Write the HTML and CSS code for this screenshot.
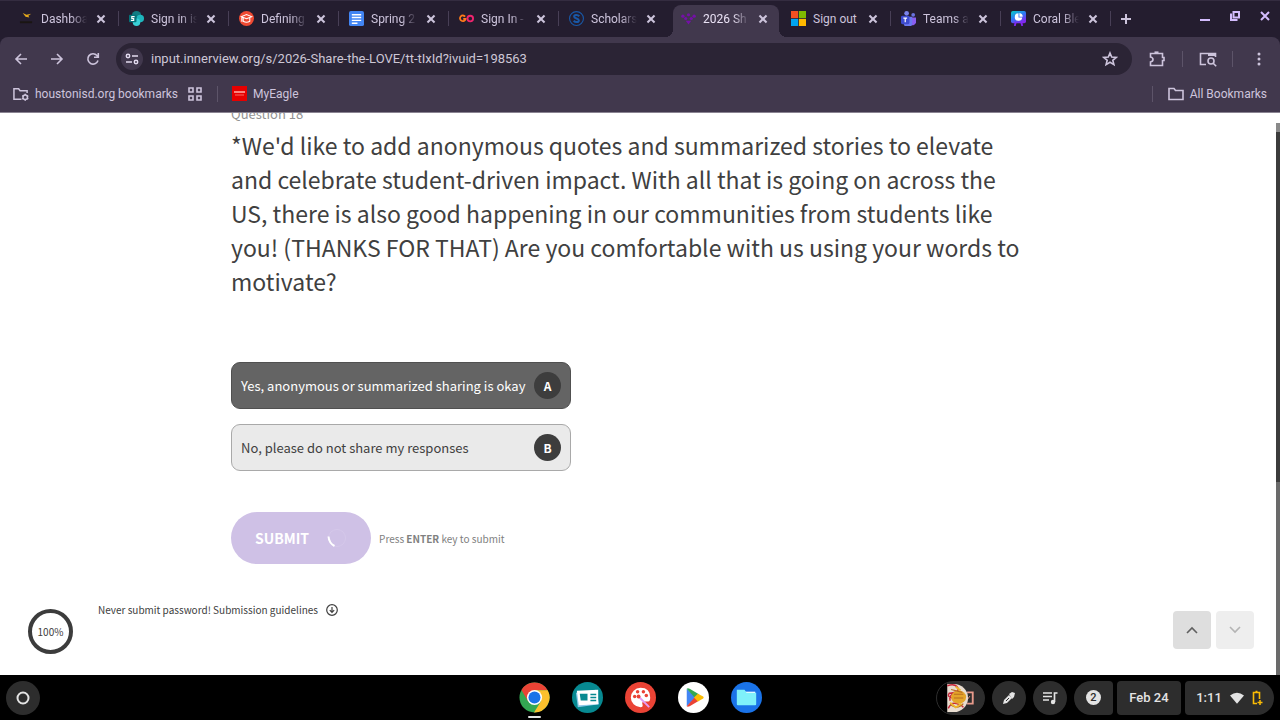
FILE: index.html
```html
<!DOCTYPE html>
<html lang="en">
<head>
    <meta charset="utf-8">
    <title>2026 Share the LOVE</title>
    <meta name="viewport" content="width=device-width, initial-scale=1">
    <link rel="stylesheet" href="styles.css">
</head>
<body>
    <!-- tabs -->
    <header class="tabstrip">
        <nav class="tabs">
            <div class="tab">
                <svg class="favicon" viewBox="0 0 16 16"><path d="M4 2l4 2 5-1-3 2 1 2-4-1z" fill="#e5a91c"/><path d="M1 12h13" stroke="#1a1512" stroke-width="2"/></svg>
                <a class="tab-title" href="#">Dashboa</a>
                <button class="tab-close" aria-label="Close tab"></button>
            </div>
            <div class="tab">
                <svg class="favicon" viewBox="0 0 16 16"><circle cx="8" cy="5" r="5" fill="#117c83"/><circle cx="12" cy="8" r="4" fill="#1eb6bd"/><circle cx="8" cy="12" r="4" fill="#39cfd6"/><rect y="4" width="8" height="8" rx="1" fill="#04727a"/><path d="M6 6H3v2h2v2H2" fill="none" stroke="#fff" stroke-width="1.2"/></svg>
                <a class="tab-title" href="#">Sign in is</a>
                <button class="tab-close" aria-label="Close tab"></button>
            </div>
            <div class="tab">
                <svg class="favicon" viewBox="0 0 16 16"><circle cx="8" cy="8" r="8" fill="#f04a32"/><path d="M2.500 6L8 3.800 13.500 6 8 8.200zM4.500 7.500V11q3.500 2 7 0V7.500M3 6.500v5" fill="none" stroke="#fff" stroke-width="1.1"/></svg>
                <a class="tab-title" href="#">Defining</a>
                <button class="tab-close" aria-label="Close tab"></button>
            </div>
            <div class="tab">
                <svg class="favicon" viewBox="0 0 16 16"><rect width="16" height="16" rx="2" fill="#4285f4"/><path d="M3 4h10M3 7h10M3 10h10M3 13h6" stroke="#fff" stroke-width="1.500"/></svg>
                <a class="tab-title" href="#">Spring 2</a>
                <button class="tab-close" aria-label="Close tab"></button>
            </div>
            <div class="tab">
                <svg class="favicon" viewBox="0 0 16 16"><path d="M6.500 6A3 3 0 1 0 7 8.500H4.500" fill="none" stroke="#ff7a1a" stroke-width="1.900"/><circle cx="12" cy="8" r="3" fill="none" stroke="#f0246e" stroke-width="2"/></svg>
                <a class="tab-title" href="#">Sign In -</a>
                <button class="tab-close" aria-label="Close tab"></button>
            </div>
            <div class="tab">
                <svg class="favicon" viewBox="0 0 16 16"><circle cx="8" cy="8" r="7.400" fill="none" stroke="#1858a8" stroke-width="1.200"/><path d="M11 5.500C9 3.500 5.500 4 5.500 6S10.500 8 10.500 10 7 12.500 5 10.500" fill="none" stroke="#1858a8" stroke-width="2.200"/></svg>
                <a class="tab-title" href="#">Scholars</a>
                <button class="tab-close" aria-label="Close tab"></button>
            </div>
            <div class="tab active">
                <svg class="favicon" viewBox="0 0 16 16" fill="#7410a6"><circle cx="2" cy="5.500" r="1.800"/><circle cx="8" cy="4" r="1.700"/><circle cx="14" cy="5.500" r="1.800"/><circle cx="5" cy="8" r="1.700"/><circle cx="11" cy="8" r="1.700"/><path d="M5 10.500h6L8 14.500z"/></svg>
                <a class="tab-title" href="#">2026 Sh</a>
                <button class="tab-close" aria-label="Close tab"></button>
            </div>
            <div class="tab">
                <svg class="favicon" viewBox="0 0 16 16"><path d="M0 0h7.600v7.600H0z" fill="#f25022"/><path d="M8.400 0H16v7.600H8.400z" fill="#7fba00"/><path d="M0 8.400h7.600V16H0z" fill="#00a4ef"/><path d="M8.400 8.400H16V16H8.400z" fill="#ffb900"/></svg>
                <a class="tab-title full" href="#">Sign out</a>
                <button class="tab-close" aria-label="Close tab"></button>
            </div>
            <div class="tab">
                <svg class="favicon" viewBox="0 0 16 16"><circle cx="6" cy="2.500" r="2.500" fill="#7b83eb"/><circle cx="13" cy="4" r="2" fill="#6a73e0"/><path d="M8 7h8v5a4 4 0 0 1-5 3z" fill="#8a5cf0"/><path d="M3 6h9v6a4 4 0 0 1-9 2z" fill="#6b78f0"/><rect y="5" width="9" height="9" rx="1.500" fill="#3d4bcf"/><path d="M2.500 7.500h4M4.500 7.500V12" stroke="#fff" stroke-width="1.300"/></svg>
                <a class="tab-title" href="#">Teams a</a>
                <button class="tab-close" aria-label="Close tab"></button>
            </div>
            <div class="tab">
                <svg class="favicon" viewBox="0 0 16 16"><defs><linearGradient id="coral" x2="0.600" y2="1"><stop stop-color="#08cfc4"/><stop offset="0.500" stop-color="#2b7df5"/><stop offset="1" stop-color="#8128ef"/></linearGradient></defs><rect width="16" height="13" rx="2" fill="url(#coral)"/><path d="M5 12l-1 4M11 12l1 4" stroke="#8128ef" stroke-width="2"/><path d="M8 2.500A4 4 0 1 0 12 7H8z" fill="#fff"/><path d="M9 2a4 4 0 0 1 3.500 4H9z" fill="#fff"/></svg>
                <a class="tab-title" href="#">Coral Ble</a>
                <button class="tab-close" aria-label="Close tab"></button>
            </div>
        </nav>
        <button class="new-tab" aria-label="New tab"><svg viewBox="0 0 10 10"><path d="M5 0v10M0 5h10"/></svg></button>
        <div class="window-controls">
            <button aria-label="Minimize"><svg viewBox="0 0 10 10"><path d="M0 9h10"/></svg></button>
            <button aria-label="Restore"><svg viewBox="0 0 10 10"><path d="M3.500 1h5.500v5.500H3.500zM1 2.500V9h6.500"/></svg></button>
            <button aria-label="Close"><svg viewBox="0 0 10 10"><path d="M1 1l8 8M9 1L1 9"/></svg></button>
        </div>
    </header>

    <!-- toolbar -->
    <div class="toolbar">
        <button class="tool" aria-label="Back"><svg class="icon" viewBox="0 0 16 16"><path d="M14 8H3M8 3L3 8l5 5"/></svg></button>
        <button class="tool" aria-label="Forward"><svg class="icon" viewBox="0 0 16 16"><path d="M2 8h11M8 3l5 5-5 5"/></svg></button>
        <button class="tool" aria-label="Reload"><svg class="icon" viewBox="0 0 16 16"><path d="M13 9.500A5.200 5.200 0 1 1 12 4.500L13 6M13.300 2v4.300H9"/></svg></button>
        <div class="omnibox">
            <button class="site-info" aria-label="Site information"><svg viewBox="0 0 14 14"><circle cx="3" cy="4" r="1.700"/><path d="M7 4h6M1 10h6"/><circle cx="11" cy="10" r="1.700"/></svg></button>
            <input class="url" type="text" aria-label="Address" value="input.innerview.org/s/2026-Share-the-LOVE/tt-tIxId?ivuid=198563">
            <button class="star" aria-label="Bookmark this page"><svg class="icon" viewBox="0 0 16 16"><path d="M8 2l1.700 4.100 4.500.300-3.400 2.900 1.100 4.300L8 11.300l-3.900 2.300 1.100-4.300-3.400-2.900 4.500-.300z"/></svg></button>
        </div>
        <div class="toolbar-actions">
            <button class="action" aria-label="Extensions"><svg class="icon" viewBox="0 0 16 16"><path d="M1.500 2.500h12v4h1.500v3h-1.500v5h-12v-3.500q2.500-.500 2.500-2.500T1.500 6z"/><path d="M5.500 1.500h4" stroke-width="2.200"/></svg></button>
            <button class="action" aria-label="Search this page"><svg class="icon wide" viewBox="0 0 18 16"><path d="M7 13.500H1.500v-11h15V6"/><path d="M9 3.500h7.500" stroke-width="3"/><circle cx="12" cy="10" r="3"/><path d="M14.200 12.200l3 3"/></svg></button>
            <button class="action" aria-label="Menu"><svg class="icon dots" viewBox="0 0 16 16"><circle cx="8" cy="3" r="1.500"/><circle cx="8" cy="8" r="1.500"/><circle cx="8" cy="13" r="1.500"/></svg></button>
        </div>
    </div>

    <!-- bookmarks -->
    <div class="bookmarks">
        <a class="bookmark" href="#"><svg class="icon" viewBox="0 0 17 16"><path d="M9 13.500H1v-11h5l1.500 2H15V7"/><circle cx="13" cy="11.500" r="2.400"/><path d="M13 7.800v1.200M13 14v1.200M9.800 9.700l1 .600M15.200 12.700l1 .600M9.800 13.300l1-.600M15.200 10.300l1-.600"/></svg>houstonisd.org bookmarks</a>
        <a class="bookmark" href="#" aria-label="Apps"><svg class="icon" viewBox="0 0 16 16"><path d="M2 2h4v4H2zM10 2h4v4h-4zM2 10h4v4H2zM10 10h4v4h-4z"/></svg></a>
        <a class="bookmark divided" href="#"><svg class="oracle" viewBox="0 0 15 15"><path d="M0 0h15v15H0z" fill="#e60000"/><path d="M2 6h11" stroke="#ffb0a8" stroke-width="1.500"/><path d="M3 9h9" stroke="#f56a62"/></svg>MyEagle</a>
        <a class="bookmark all" href="#"><svg class="icon" viewBox="0 0 16 16"><path d="M1 2.500h5l1.500 2H15v9H1z"/></svg>All Bookmarks</a>
    </div>

    <!-- survey page -->
    <div class="viewport">
        <main class="survey">
            <form class="question">
                <div class="question-number">Question 18</div>
                <h1 class="question-title">*We'd like to add anonymous quotes and summarized stories to elevate and celebrate student-driven impact. With all that is going on across the US, there is also good happening in our communities from students like you! (THANKS FOR THAT) Are you comfortable with us using your words to motivate?</h1>
                <div class="options">
                    <label class="option">
                        <input type="radio" name="share" value="A" checked>
                        <span class="option-text">Yes, anonymous or summarized sharing is okay</span>
                        <span class="option-key">A</span>
                    </label>
                    <label class="option">
                        <input type="radio" name="share" value="B">
                        <span class="option-text">No, please do not share my responses</span>
                        <span class="option-key">B</span>
                    </label>
                </div>
                <div class="submit-row">
                    <button class="submit" type="button">SUBMIT
                        <svg class="spinner" viewBox="0 0 20 20"><circle cx="10" cy="10" r="8.500" stroke="#d5c8ea"/><path d="M1.500 8.500Q2 15 7.500 18" stroke="#fff" stroke-width="2"/></svg>
                    </button>
                    <span class="hint">Press <b>ENTER</b> key to submit</span>
                </div>
            </form>
            <footer class="survey-footer">
                <div class="progress">100%</div>
                <a class="guidelines" href="#">Never submit password! Submission guidelines
                    <svg viewBox="0 0 12 12"><circle cx="6" cy="6" r="5.300"/><path d="M6 3v5M3.800 6.200L6 8.500l2.200-2.300"/></svg>
                </a>
                <div class="pager">
                    <button aria-label="Previous question"><svg viewBox="0 0 14 14"><path d="M2 10l5-5 5 5"/></svg></button>
                    <button aria-label="Next question" disabled><svg viewBox="0 0 14 14"><path d="M2 4l5 5 5-5"/></svg></button>
                </div>
            </footer>
        </main>
        <div class="scrollbar"><div class="thumb"></div></div>
    </div>

    <!-- shelf -->
    <footer class="shelf">
        <div class="shelf-side">
            <button class="launcher" aria-label="Launcher"><svg viewBox="0 0 14 14"><circle cx="7" cy="7" r="5.500"/></svg></button>
        </div>
        <div class="apps-row">
            <button class="app running" aria-label="Chrome"><svg viewBox="0 0 32 32"><circle cx="16" cy="16" r="15.500" fill="#33a852"/><path d="M16 .500A15.500 15.500 0 0 1 29.500 8.500H16L9.500 20 2.500 8.300A15.500 15.500 0 0 1 16 .500z" fill="#ea4335"/><path d="M16 8.500h13.600A15.500 15.500 0 0 1 15.500 31.500L22.500 20z" fill="#fbc02d"/><circle cx="16" cy="16" r="7.800" fill="#fff"/><circle cx="16" cy="16" r="6.200" fill="#1a73e8"/></svg></button>
            <button class="app" aria-label="News"><svg viewBox="0 0 32 32"><circle cx="16" cy="16" r="16" fill="#078991"/><path d="M4 11l21-3 3 15-22 3z" fill="#8ac8e8"/><path d="M5 9l22-1v15L7 24z" fill="#fff"/><path d="M8 12h8v7H9z" fill="#078991"/><path d="M19 13h6M19 16h6M19 19h6" stroke="#078991" stroke-width="1.500"/></svg></button>
            <button class="app" aria-label="Canvas"><svg viewBox="0 0 32 32"><circle cx="16" cy="16" r="16" fill="#ea4335"/><path d="M16 6a10 10 0 1 0 0 20q3 0 2-3t2-3h4q2 0 2-4Q26 6 16 6z" fill="#fff"/><g fill="#ea4335"><circle cx="10" cy="15" r="1.800"/><circle cx="13" cy="10" r="1.800"/><circle cx="19" cy="10" r="1.800"/><circle cx="22" cy="14" r="1.800"/></g><path d="M14 15l11 11" stroke="#e59cf2" stroke-width="2"/><circle cx="14" cy="15" r="2" fill="#ea4335"/></svg></button>
            <button class="app" aria-label="Play Store"><svg viewBox="0 0 32 32"><circle cx="16" cy="16" r="16" fill="#fff"/><path d="M9 7v18l10-9z" fill="#4285f4"/><path d="M9 7q1-1 3 0l10 6-4 4z" fill="#34a853"/><path d="M9 25q1 1 3 0l10-6-4-4z" fill="#ea4335"/><path d="M20.500 12L26 15q1 1 0 2l-5.500 3-4-4z" fill="#fbbc04"/></svg></button>
            <button class="app" aria-label="Files"><svg viewBox="0 0 32 32"><circle cx="16" cy="16" r="16" fill="#1a73e8"/><path d="M14 10h11v6H14z" fill="#fff"/><path d="M6 8h8l2 3h10v12q0 1-1 1H7q-1 0-1-1z" fill="#7ff1fa"/></svg></button>
        </div>
        <div class="shelf-side status">
            <button class="holding" aria-label="Recent files"><svg viewBox="0 0 48 34"><path d="M31 11h6v12h-6" fill="none" stroke="#e79a8b" stroke-width="2"/><path d="M34 15l-3 4" stroke="#e79a8b"/><path d="M10 2h7a15 15 0 0 1 0 30h-7z" fill="#e9ddd0"/><path d="M10 4q8-3 11 2t-9 6q-3 4 4 5t12-2M11 28q3-7 9-5t7 4M13 20q-2-6 5-8t8 4" fill="none" stroke="#c6283a" stroke-width="1.500"/><ellipse cx="22" cy="16" rx="8" ry="7" fill="#e4a52a"/><path d="M17 13h10M17 17h10M13 24q8 6 14-1M14 8l12 3" fill="none" stroke="#b66c20" stroke-width="1.200"/><path d="M13 22l6 5 6-4M19 5l5 4" fill="none" stroke="#edb72d" stroke-width="2"/></svg></button>
            <button class="round" aria-label="Stylus tools"><svg viewBox="0 0 16 16"><path d="M2 14l1-4 5-5 3 3-5 5z" fill="#e3e3e3"/><path d="M8 4l3-2 3 1-1 4-2 2" fill="#e3e3e3"/><path d="M5 11l3-3" stroke="#2d2d2d"/></svg></button>
            <button class="round" aria-label="Media"><svg viewBox="0 0 16 16"><path d="M1 3h9M1 6.500h9M1 10h6M12.500 12V3h3" fill="none" stroke="#e3e3e3" stroke-width="1.700"/><circle cx="11" cy="12" r="2.200" fill="#e3e3e3"/></svg></button>
            <div class="tray">
                <button class="notifications"><span class="count">2</span></button>
                <button class="date">Feb 24</button>
                <button class="clock">1:11
                    <svg class="wifi" viewBox="0 0 16 13"><path d="M0 3.500Q8-2.500 16 3.500L8 13z" fill="#e3e3e3"/></svg>
                    <svg class="battery" viewBox="0 0 11 16"><path d="M5 13.500H1.500v-11h6V9M3.500 1.500h2" fill="none" stroke="#fbbc04" stroke-width="1.600"/><path d="M8 10v5M5.500 12.500h5" stroke="#fbbc04" stroke-width="1.500"/></svg>
                </button>
            </div>
        </div>
    </footer>
</body>
</html>
```
FILE: styles.css
```css
* {
    box-sizing: border-box;
}
body {
    margin: 0;
    height: 100vh;
    display: flex;
    flex-direction: column;
    overflow: hidden;
    background: #241d2f;
    font-family: Roboto, "Liberation Sans", sans-serif;
}
button {
    border: 0;
    padding: 0;
    background: none;
    color: inherit;
    font: inherit;
    display: flex;
    align-items: center;
    justify-content: center;
}
a {
    color: inherit;
    text-decoration: none;
}
svg {
    display: block;
    flex: none;
}

/* tabs */
.tabstrip {
    flex: none;
    height: 37px;
    display: flex;
    border-top: 1px solid #342c40;
    color: #cdc4dc;
}
.tabs {
    flex: 1;
    min-width: 0;
    display: flex;
    padding-left: 9px;
}
.tab {
    flex: 1 1 0;
    min-width: 0;
    display: flex;
    align-items: center;
    padding: 0 4px 1px 10px;
    position: relative;
}
.tab::after {
    content: "";
    position: absolute;
    right: 0;
    top: 10px;
    width: 1px;
    height: 15px;
    background: #483f56;
}
.tab:has(+ .active)::after {
    display: none;
}
.tab.active {
    margin: 4px 2px 0 4px;
    padding: 0 2px 5px 8px;
    background: #41384d;
    border-radius: 8px 8px 0 0;
    color: #e9e1f4;
}
/* flared feet of the selected tab */
.tab.active::before,
.tab.active::after {
    content: "";
    position: absolute;
    top: auto;
    bottom: 0;
    width: 8px;
    height: 8px;
}
.tab.active::before {
    left: -8px;
    background: radial-gradient(circle at 0 0, transparent 8px, #41384d 8px);
}
.tab.active::after {
    right: -8px;
    background: radial-gradient(circle at 100% 0, transparent 8px, #41384d 8px);
}
.favicon {
    width: 15px;
    height: 15px;
    margin-right: 7px;
}
.tab-title {
    flex: 1;
    min-width: 0;
    white-space: nowrap;
    font-size: 12px;
    line-height: 16px;
    -webkit-mask-image: linear-gradient(to right, #000 65%, transparent);
    mask-image: linear-gradient(to right, #000 65%, transparent);
}
.tab-title.full {
    -webkit-mask-image: none;
    mask-image: none;
}
.tab-close {
    width: 28px;
    height: 16px;
    flex: none;
    position: relative;
}
.tab-close::before,
.tab-close::after {
    content: "";
    position: absolute;
    width: 10px;
    height: 2px;
    background: #cdc4dc;
    transform: rotate(45deg);
}
.tab-close::after {
    transform: rotate(-45deg);
}
.new-tab {
    width: 30px;
    height: 35px;
}
.new-tab svg {
    width: 10px;
    height: 10px;
    stroke: #cdc4dc;
    stroke-width: 2;
}
.window-controls {
    display: flex;
    width: 139px;
    padding: 0 0 6px 49px;
}
.window-controls button {
    width: 30px;
}
.window-controls svg {
    width: 10px;
    height: 10px;
    fill: none;
    stroke: #d3bcfd;
    stroke-width: 2;
}

/* toolbar */
.toolbar {
    flex: none;
    height: 43px;
    display: flex;
    align-items: center;
    padding: 0 4px 0 3px;
    background: #41384d;
    border-radius: 8px 8px 0 0;
    color: #cdc4dc;
}
.icon {
    width: 16px;
    height: 16px;
    fill: none;
    stroke: #cdc4dc;
    stroke-width: 1.6;
}
.icon.wide {
    width: 18px;
}
.tool {
    width: 36px;
    height: 32px;
}
.omnibox {
    flex: 1;
    height: 32px;
    display: flex;
    align-items: center;
    margin-left: 5px;
    padding: 0 14px 0 5px;
    border-radius: 16px;
    background: #2b2435;
}
.site-info {
    width: 22px;
    height: 22px;
    border-radius: 50%;
    background: #41384d;
}
.site-info svg {
    width: 14px;
    height: 14px;
    fill: none;
    stroke: #e3dbef;
    stroke-width: 1.5;
}
.url {
    flex: 1;
    min-width: 0;
    border: 0;
    outline: 0;
    padding: 0 8px;
    background: none;
    color: #cdc7d5;
    font: 13px/20px Roboto, "Liberation Sans", sans-serif;
}
.toolbar-actions {
    display: flex;
}
.action {
    width: 50px;
    height: 16px;
    border-left: 1px solid #5d5469;
}
.action:first-child {
    border: 0;
}
.dots {
    fill: #cdc4dc;
    stroke: none;
}
.toolbar-actions .action:last-child {
    width: 44px;
    padding-left: 8px;
}

/* bookmarks */
.bookmarks {
    flex: none;
    height: 33px;
    display: flex;
    align-items: center;
    gap: 9px;
    padding: 0 13px 5px;
    border-bottom: 1px solid #8a8492;
    background: #41384d;
    color: #cdc4dc;
    font-size: 12px;
    line-height: 16px;
}
.bookmark {
    display: flex;
    align-items: center;
    gap: 6px;
}
.bookmark.divided {
    margin-left: 5px;
    padding-left: 14px;
    border-left: 1px solid #5d5469;
}
.bookmark.all {
    margin-left: auto;
    padding-left: 15px;
    border-left: 1px solid #5d5469;
}
.oracle {
    width: 15px;
    height: 15px;
}

/* survey */
.viewport {
    flex: 1;
    min-height: 0;
    display: flex;
    overflow: hidden;
    background: #fff;
    color: #404040;
    font-family: "Noto Sans CJK SC", "Noto Sans", sans-serif;
}
.survey {
    flex: 1;
    display: flex;
    flex-direction: column;
}
.question {
    width: 100%;
    max-width: 814px;
    margin: -9px auto 0;
}
.question-number {
    color: #929292;
    font-size: 13px;
    line-height: 20px;
}
.question-title {
    margin: 4px 0 0;
    padding-right: 10px;
    font-size: 23px;
    font-weight: 400;
    line-height: 34px;
}
.options {
    display: flex;
    flex-direction: column;
    gap: 15px;
    width: 340px;
    margin-top: 64px;
}
.option {
    display: flex;
    align-items: center;
    height: 47px;
    padding: 0 9px;
    border: 1px solid #a9a9a9;
    border-radius: 9px;
    background: #eaeaea;
    font-size: 13px;
    white-space: nowrap;
}
.option:has(:checked) {
    background: #646464;
    border-color: #505050;
    color: #fff;
}
.option input {
    position: absolute;
    opacity: 0;
}
.option-text {
    flex: 1;
    min-width: 0;
}
.option-key {
    width: 27px;
    height: 27px;
    border-radius: 50%;
    background: #3d3d3d;
    color: #fff;
    font-size: 12px;
    font-weight: 700;
    line-height: 27px;
    text-align: center;
}
.submit-row {
    display: flex;
    align-items: center;
    gap: 8px;
    margin-top: 41px;
}
.submit {
    height: 52px;
    padding: 0 24px;
    gap: 18px;
    border-radius: 26px;
    background: #cfc1e6;
    color: #fff;
    font-size: 14px;
    font-weight: 700;
}
.spinner {
    width: 20px;
    height: 20px;
    fill: none;
}
.hint {
    color: #808080;
    font-size: 10px;
}
.survey-footer {
    display: flex;
    align-items: flex-start;
    margin-top: auto;
    padding: 0 22px 21px 28px;
}
.progress {
    width: 45px;
    height: 45px;
    border: 4px solid #3c3c3c;
    border-radius: 50%;
    font-size: 10px;
    line-height: 37px;
    text-align: center;
}
.guidelines {
    display: flex;
    align-items: center;
    gap: 8px;
    margin: -7px auto 0 25px;
    font-size: 10px;
    line-height: 16px;
}
.guidelines svg {
    width: 12px;
    height: 12px;
    fill: none;
    stroke: #404040;
    stroke-width: 1.2;
}
.pager {
    display: flex;
    gap: 5px;
    padding-top: 2px;
}
.pager button {
    width: 38px;
    height: 38px;
    border-radius: 4px;
    background: #dedede;
}
.pager button:disabled {
    background: #eee;
}
.pager svg {
    width: 14px;
    height: 14px;
    fill: none;
    stroke: #606060;
    stroke-width: 1.6;
}
.pager :disabled svg {
    stroke: #b4b4b4;
}
.scrollbar {
    width: 4px;
    padding-top: 10px;
    background: linear-gradient(#fff 10px, #6a6a6a 10px);
}
.thumb {
    height: 65%;
    border-top: 9px solid #8a8a8a;
    background: #3c3c3c;
}

/* shelf */
.shelf {
    flex: none;
    height: 45px;
    display: flex;
    align-items: center;
    padding: 0 6px;
    background: #000;
    color: #e3e3e3;
}
.shelf-side {
    flex: 1;
    display: flex;
    align-items: center;
}
.launcher,
.round {
    width: 34px;
    height: 34px;
    border-radius: 50%;
    background: #2d2d2d;
}
.launcher svg {
    width: 14px;
    height: 14px;
    fill: none;
    stroke: #e3e3e3;
    stroke-width: 2;
}
.apps-row {
    display: flex;
    gap: 22px;
}
.app {
    position: relative;
}
.app svg {
    width: 31px;
    height: 31px;
}
.running::after {
    content: "";
    position: absolute;
    left: 9px;
    bottom: -5px;
    width: 13px;
    height: 2px;
    border-radius: 1px;
    background: #e3e3e3;
}
.status {
    justify-content: flex-end;
    gap: 7px;
}
.round svg {
    width: 16px;
    height: 16px;
}
.holding {
    border: 1px solid #2d2d2d;
    border-radius: 17px;
    overflow: hidden;
    background: linear-gradient(to right, #000 10px, #2d2d2d 10px);
}
.holding svg {
    width: 47px;
    height: 32px;
}
.tray {
    display: flex;
    gap: 4px;
    font-size: 13px;
    font-weight: 500;
}
.tray button {
    height: 34px;
    border-radius: 4px;
    background: #2d2d2d;
}
.tray .notifications {
    width: 39px;
    border-radius: 17px 4px 4px 17px;
}
.count {
    width: 15px;
    height: 15px;
    border-radius: 50%;
    background: #e3e3e3;
    color: #2d2d2d;
    font-size: 11px;
    line-height: 15px;
}
.tray .date {
    width: 64px;
}
.tray .clock {
    width: 89px;
    gap: 8px;
    border-radius: 4px 17px 17px 4px;
}
.wifi {
    width: 14px;
    height: 12px;
}
.battery {
    width: 11px;
    height: 16px;
}
```
